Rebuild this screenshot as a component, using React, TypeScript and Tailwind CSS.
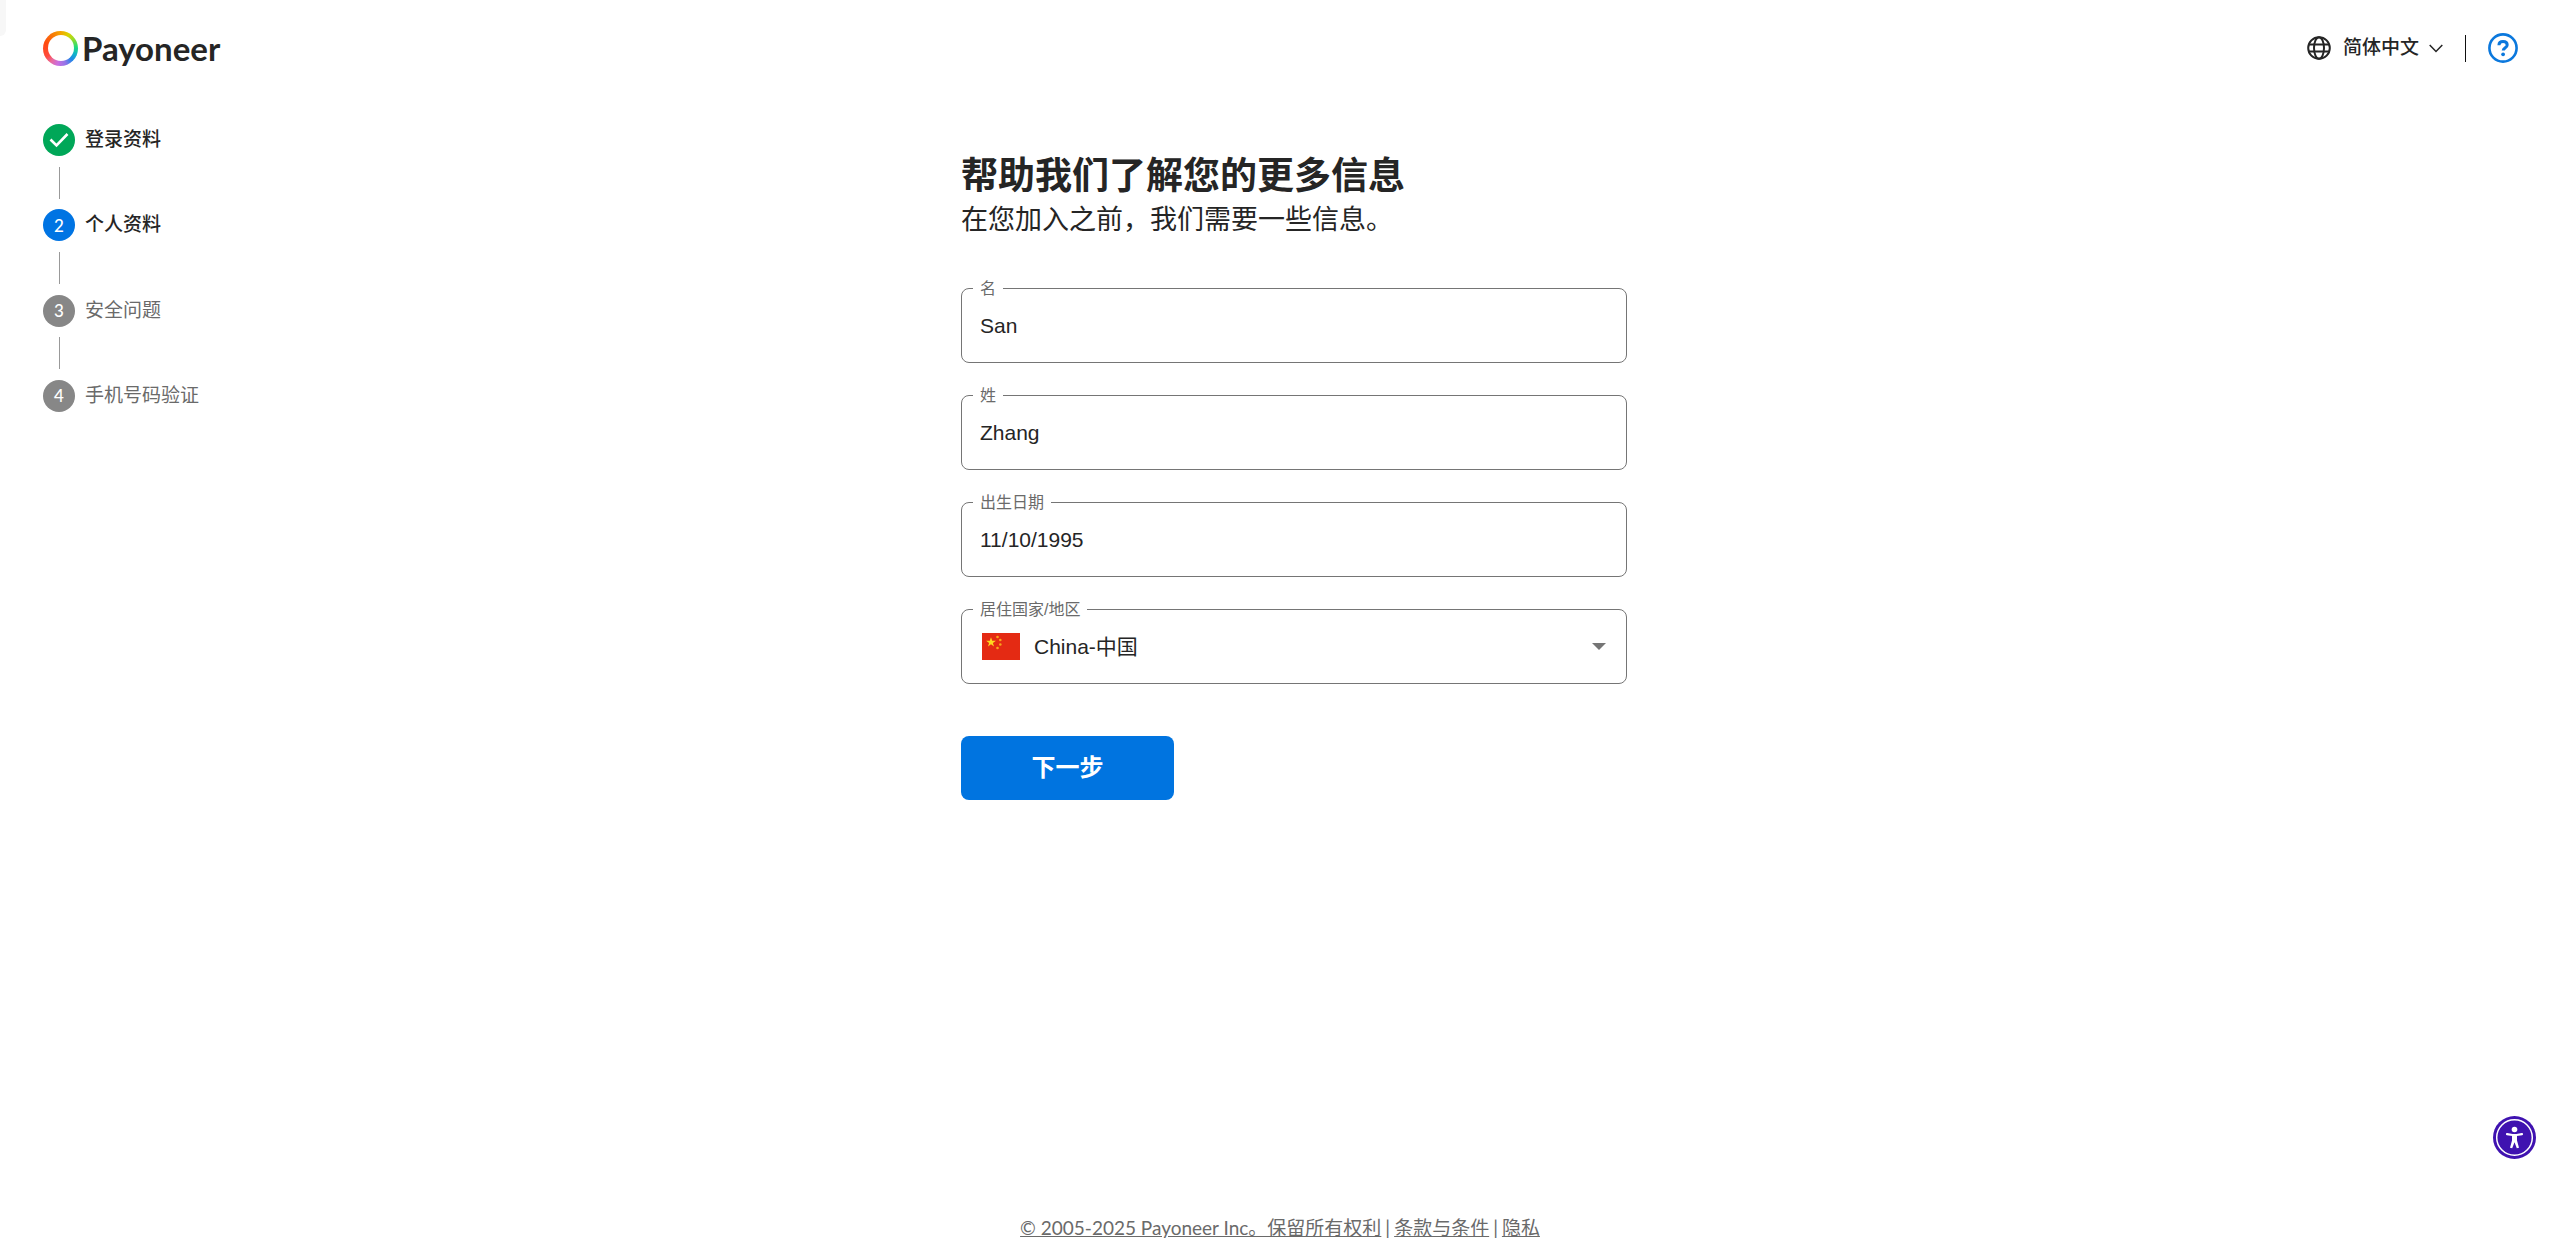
import { useState } from 'react'
import { clsx } from 'clsx'

type StepStatus = 'done' | 'current' | 'upcoming'

interface Step {
  id: number
  label: string
  status: StepStatus
}

const STEPS: Step[] = [
  { id: 1, label: '登录资料', status: 'done' },
  { id: 2, label: '个人资料', status: 'current' },
  { id: 3, label: '安全问题', status: 'upcoming' },
  { id: 4, label: '手机号码验证', status: 'upcoming' },
]

const BADGE_COLORS: Record<StepStatus, string> = {
  done: 'bg-[#00a758]',
  current: 'bg-[#0074e3]',
  upcoming: 'bg-[#878787]',
}

function Logo() {
  return (
    <a href="#" aria-label="Payoneer" className="flex items-center gap-1">
      <span className="flex size-[35px] items-center justify-center rounded-full bg-[conic-gradient(#f5a300_0deg,#d9d400_30deg,#8fdc2c_55deg,#1fdc7c_85deg,#10b4c8_110deg,#1f86e8_135deg,#8f74e8_160deg,#c86ee0_190deg,#e86aa0_215deg,#ff4a3c_240deg,#ff4a10_290deg,#f77a08_330deg,#f5a300_360deg)]">
        <span className="size-[26px] rounded-full bg-white" />
      </span>
      <span className="font-['Lato'] text-[33px] leading-[40px] font-bold text-[#252525]">Payoneer</span>
    </a>
  )
}

function GlobeIcon() {
  return (
    <svg viewBox="0 0 24 24" className="size-6" fill="none" stroke="currentColor" strokeWidth="2">
      <circle cx="12" cy="12" r="10.8" />
      <ellipse cx="12" cy="12" rx="5" ry="10.8" />
      <path d="M2 8.4h20M2 15.6h20" />
    </svg>
  )
}

function HelpIcon() {
  return (
    <svg viewBox="0 0 30 30" className="size-[30px]" fill="none" stroke="currentColor">
      <circle cx="15" cy="15" r="13.6" strokeWidth="2.6" />
      <path d="M10.9 12.2C11 9.9 12.7 8.6 15 8.6C17.4 8.6 19.2 9.9 19.2 12C19.2 14.7 15.2 14.7 15.2 17.6" strokeWidth="3" />
      <circle cx="15.1" cy="21.3" r="1.9" fill="currentColor" stroke="none" />
    </svg>
  )
}

function ChinaFlag() {
  return (
    <svg viewBox="0 0 38 27" className="h-[27px] w-[38px]">
      <rect width="38" height="27" fill="#e42a13" />
      <path d="M9 4.2l1.2 3.500h3.700l-3 2.200 1.100 3.500-3-2.200-3 2.200 1.100-3.500-3-2.200h3.700z" fill="#ffd91f" />
      <g fill="#f9a51a">
        <circle cx="15.5" cy="4" r="1.3" />
        <circle cx="18.3" cy="7" r="1.3" />
        <circle cx="18.3" cy="11.5" r="1.3" />
        <circle cx="15.5" cy="15" r="1.3" />
      </g>
    </svg>
  )
}

function StepList() {
  return (
    <ol className="flex h-72 flex-col justify-between">
      {STEPS.map((step, index) => (
        <li key={step.id} className="contents">
          {index > 0 && <span className="ml-4 h-8 w-px bg-[#999999]" />}
          <div className="flex items-center gap-[10px]">
            <span
              className={clsx(
                "flex size-8 items-center justify-center rounded-full font-['Lato'] text-[17px] leading-none font-medium text-white",
                BADGE_COLORS[step.status]
              )}
            >
              {step.status === 'done' ? (
                <svg viewBox="0 0 32 32" className="size-8" fill="none" stroke="currentColor" strokeWidth="2.6">
                  <path d="M7.5 15.5l6 6L24.5 10" />
                </svg>
              ) : (
                step.id
              )}
            </span>
            <span
              className={clsx(
                'text-[19px] leading-7',
                step.status === 'upcoming' ? 'text-[#6a6a6a]' : 'font-medium text-[#252525]'
              )}
            >
              {step.label}
            </span>
          </div>
        </li>
      ))}
    </ol>
  )
}

interface FieldProps {
  id: string
  label: string
  children: React.ReactNode
}

function Field({ id, label, children }: FieldProps) {
  return (
    <div className="relative h-[75px] rounded-lg border border-[#757575]">
      <label
        htmlFor={id}
        className="absolute -top-3 left-[11px] bg-white px-[7px] text-[16px] leading-6 text-[#6a6a6a]"
      >
        {label}
      </label>
      {children}
    </div>
  )
}

const INPUT_CLASS = 'h-full w-full rounded-lg bg-transparent px-[18px] text-[21px] text-[#252525] outline-none'

export default function App() {
  const [firstName, setFirstName] = useState('San')
  const [lastName, setLastName] = useState('Zhang')
  const [birthDate, setBirthDate] = useState('11/10/1995')
  const [country, setCountry] = useState('CN')

  return (
    <div className="relative flex min-h-screen flex-col bg-white font-['Liberation_Sans','Noto_Sans_CJK_SC',sans-serif] text-[#252525]">
      <div className="absolute top-0 left-0 h-9 w-[6px] rounded-br-md bg-[#f7f7f7]" />

      <header className="flex items-center justify-between pt-7 pr-[42px] pl-[43px]">
        <Logo />
        <div className="flex items-center">
          <button type="button" className="flex items-center">
            <GlobeIcon />
            <span className="ml-3 text-[19px] leading-7 font-medium">简体中文</span>
            <svg viewBox="0 0 14 9" className="ml-[10px] h-[9px] w-[14px]" fill="none" stroke="currentColor" strokeWidth="1.5">
              <path d="M0.7 1l6.3 6.5L13.3 1" />
            </svg>
          </button>
          <span className="ml-[22px] h-[27px] w-px bg-[#111111]" />
          <button type="button" aria-label="Help" className="ml-[22px] text-[#0b78dd]">
            <HelpIcon />
          </button>
        </div>
      </header>

      {/* Steps on the left, form in the middle */}
      <div className="grid flex-1 grid-cols-[1fr_minmax(0,666px)_1fr] pt-14 pr-[15px] pl-[43px]">
        <nav aria-label="注册步骤">
          <StepList />
        </nav>

        <main className="pt-[30px]">
          <h1 className="text-[37px] leading-[46px] font-bold">帮助我们了解您的更多信息</h1>
          <p className="text-[27px] leading-10">在您加入之前，我们需要一些信息。</p>

          <form className="mt-12" onSubmit={(event) => event.preventDefault()}>
            <div className="flex flex-col gap-8">
              <Field id="first-name" label="名">
                <input
                  id="first-name"
                  type="text"
                  className={INPUT_CLASS}
                  value={firstName}
                  onChange={(event) => setFirstName(event.target.value)}
                />
              </Field>
              <Field id="last-name" label="姓">
                <input
                  id="last-name"
                  type="text"
                  className={INPUT_CLASS}
                  value={lastName}
                  onChange={(event) => setLastName(event.target.value)}
                />
              </Field>
              <Field id="birth-date" label="出生日期">
                <input
                  id="birth-date"
                  type="text"
                  className={INPUT_CLASS}
                  value={birthDate}
                  onChange={(event) => setBirthDate(event.target.value)}
                />
              </Field>
              <Field id="country" label="居住国家/地区">
                <select
                  id="country"
                  className="h-full w-full appearance-none rounded-lg bg-transparent pr-12 pl-[72px] text-[21px] text-[#252525] outline-none"
                  value={country}
                  onChange={(event) => setCountry(event.target.value)}
                >
                  <option value="CN">China-中国</option>
                </select>
                <span className="pointer-events-none absolute inset-y-0 left-5 flex items-center">
                  <ChinaFlag />
                </span>
                <span className="pointer-events-none absolute inset-y-0 right-5 flex items-center">
                  <svg viewBox="0 0 14 7" className="h-[7px] w-[14px]">
                    <path d="M0 0h14L7 7z" fill="#757575" />
                  </svg>
                </span>
              </Field>
            </div>

            <button
              type="submit"
              className="mt-[52px] h-16 w-[213px] rounded-lg bg-[#0074e0] text-[24px] leading-8 font-bold text-white"
            >
              下一步
            </button>
          </form>
        </main>
      </div>

      <footer className="flex justify-center gap-1 pb-5 font-['Lato','Noto_Sans_CJK_SC',sans-serif] text-[19px] leading-6 text-[#6a6a6a]">
        <a href="#" className="underline">© 2005-2025 Payoneer Inc。保留所有权利</a>
        <span>|</span>
        <a href="#" className="underline">条款与条件</a>
        <span>|</span>
        <a href="#" className="underline">隐私</a>
      </footer>

      <button type="button" aria-label="Accessibility" className="fixed right-6 bottom-[101px]">
        <svg viewBox="0 0 43 43" className="size-[43px]">
          <circle cx="21.5" cy="21.5" r="21.5" fill="#3f12b0" />
          <circle cx="21.5" cy="21.5" r="17.8" fill="none" stroke="#fff" strokeWidth="1.5" />
          <circle cx="21.5" cy="13.5" r="2.8" fill="#fff" />
          <path
            d="M14 18.2L19.5 19H23.5L29 18.2"
            fill="none"
            stroke="#fff"
            strokeWidth="2.2"
            strokeLinecap="round"
          />
          <path d="M19 18.500h5v6l2 7.200-2.200 .6-2.300-6-2.300 6-2.200-.6 2-7.200z" fill="#fff" />
        </svg>
      </button>
    </div>
  )
}
